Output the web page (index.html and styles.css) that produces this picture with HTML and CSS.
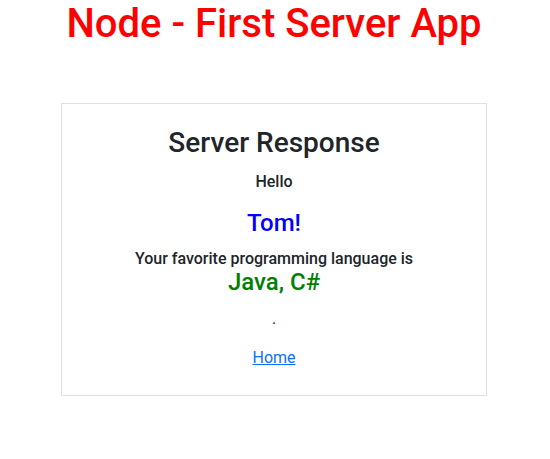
FILE: index.html
```html
<!DOCTYPE html>
<html lang="en">
<head>
<meta charset="utf-8">
<title>Node - First Server App</title>
<link rel="stylesheet" href="styles.css">
</head>
<body>
  <h1 class="page-title">Node - First Server App</h1>
  <div class="card">
    <h3 class="card-title">Server Response</h3>
    <h6 class="line hello">Hello</h6>
    <h4 class="name">Tom!</h4>
    <h6 class="line lang-label">Your favorite programming language is</h6>
    <h4 class="lang">Java, C#</h4>
    <p class="dot">.</p>
    <a class="home" href="#">Home</a>
  </div>
</body>
</html>
```
FILE: styles.css
```css
* { box-sizing: border-box; }
body {
  margin: 0;
  padding: 0 2px 0 0;
  font-family: Roboto, "Liberation Sans", sans-serif;
  color: #212529;
  background: #fff;
  text-align: center;
  font-size: 16px;
  line-height: 1.5;
}
h1, h3, h4, h6, p { margin: 0; font-weight: 500; line-height: 1.2; }
.page-title {
  color: #ff0000;
  font-size: 40px;
  line-height: normal;
}
.card {
  width: 426px;
  margin: 56px auto 0;
  border: 1px solid #dee2e6;
  padding: 22px 16px 25px;
  display: flex;
  flex-direction: column;
  align-items: center;
}
.card-title { font-size: 28px; }
.line { font-size: 16px; }
.hello { margin-top: 12px; }
.name { font-size: 24px; color: #0000ff; margin-top: 18px; }
.lang-label { margin-top: 11px; }
.lang { font-size: 24px; color: #008000; margin-top: 0; }
.dot { font-weight: 400; margin-top: 10px; line-height: 1.5; }
.home {
  color: #0d6efd;
  text-decoration: underline;
  margin-top: 15px;
  line-height: 1.5;
}
```
